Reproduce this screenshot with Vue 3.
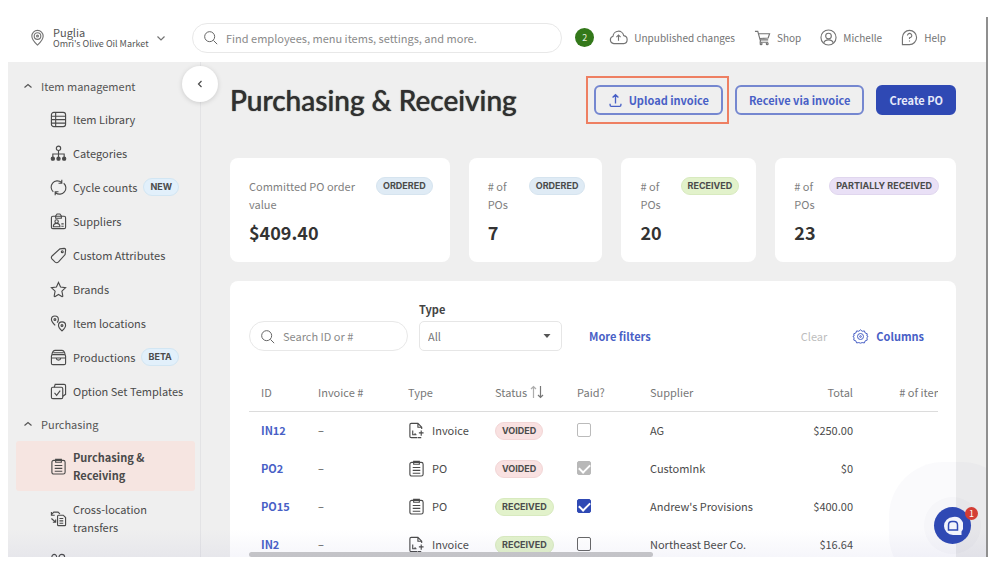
<script setup>
import { ref } from 'vue'

const items = [
  { label: 'Item Library', icon: 'library' },
  { label: 'Categories', icon: 'tree' },
  { label: 'Cycle counts', icon: 'cycle', tag: 'NEW' },
  { label: 'Suppliers', icon: 'supplier' },
  { label: 'Custom Attributes', icon: 'tag' },
  { label: 'Brands', icon: 'star' },
  { label: 'Item locations', icon: 'pins' },
  { label: 'Productions', icon: 'case', tag: 'BETA' },
  { label: 'Option Set Templates', icon: 'templates' },
]
const purchasing = [
  { label: 'Purchasing & Receiving', icon: 'clipboard', active: true },
  { label: 'Cross-location transfers', icon: 'transfer' },
  { label: 'Vendors', icon: 'people' },
]
const sections = [
  { title: 'Item management', items },
  { title: 'Purchasing', items: purchasing },
]

const paths = {
  library: '<rect x="1.5" y="1.5" width="15" height="15" rx="2.5"/><path d="M1.5 5.5h15M1.5 9.2h15M1.5 12.8h15M6 1.5v15"/>',
  tree: '<circle cx="9" cy="3.5" r="2.3"/><path d="M9 6v7M3 13V9.5h12V13"/><g fill="currentColor"><circle cx="3" cy="14.5" r="1.7"/><circle cx="9" cy="14.5" r="1.7"/><circle cx="15" cy="14.5" r="1.7"/></g>',
  cycle: '<path d="M3.500 13.500A6.500 6.500 0 0 1 12 3.500M14.500 4.500A6.500 6.500 0 0 1 6 14.500M12.500 .8V4.500H9M5.500 17.200V13.500H9"/>',
  supplier: '<rect x="1.500" y="3.500" width="15" height="13" rx="1.500"/><path d="M6 5.500h6V3L10.500 1h-3L6 3zM3.500 14.500c0-2.500 1.500-3.500 3.500-3.500s3.500 1 3.500 3.500zM12 11.500h2.500M12 14h2.500"/><circle cx="7" cy="9" r="1.800"/>',
  tag: '<path d="M10.500 2 15 1.500Q16.700 1.500 16.500 3.500L16 8 9 15.800Q7.200 17.500 5.500 16L2 12.500Q.8 11 2.200 9.500z"/><circle cx="13" cy="5" r="1"/>',
  star: '<path d="m9 1.500 2.200 4.800 5.300.7-3.900 3.700 1 5.300Q13.400 16.800 12.500 16.300L9 14.300l-3.500 2Q4.600 16.800 4.400 16l1-5.300L1.500 7l5.300-.7z"/>',
  pins: '<path d="M5.500 11C3 8.500 1.500 6.800 1.500 4.800a3.700 3.700 0 0 1 7.400 0c0 1.200-.5 2.200-1.300 3.300M12.700 16.800C10.300 14.500 9 13 9 11a3.700 3.700 0 0 1 7.500 0c0 2-1.400 3.500-3.800 5.800z"/><circle cx="5.200" cy="4.800" r="1"/><circle cx="12.700" cy="11" r="1"/>',
  case: '<rect x="1.500" y="6" width="15" height="10.500" rx="1.500"/><path d="M2 6c.5-3 1.500-4.500 3.500-4.500h7c2 0 3 1.500 3.500 4.500M3.500 4h11M2 9.500h14M6.500 9.500c.5 3 4.500 3 5 0"/>',
  templates: '<rect x="1.500" y="4.500" width="12" height="12" rx="1.500"/><path d="M4.500 4.500 5.500 1.500H15q1.500 0 1.500 1.500v9l-3 2M4.800 10.500l2.200 2.500 3.800-5"/>',
  clipboard: '<rect x="2" y="2.500" width="14" height="14.500" rx="2"/><path d="M6 1.500h6v3H6zM5 8h8M5 11h8M5 14h8"/>',
  transfer: '<path d="M5 5.500H1.500V2M1.500 5 4 2.200h4.500l2 2M1.500 9l4.500 4M6 10v3H3M8 6.500q0-1 1-1h5l2.500 2.500v7.500q0 1-1 1H9q-1 0-1-1z"/><path d="M10 9h4M10 11.500h4M10 14h4"/>',
  people: '<circle cx="4.500" cy="4" r="2.500"/><circle cx="12.500" cy="4.500" r="3"/><path d="M1 12c0-4 6-4 6.500-1M8 14c0-5 9-5 9 0z"/>',
  invoice: '<path d="M10 16.500H3.500Q2 16.500 2 15V3Q2 1.500 3.500 1.500H10.500l4 4V7.500M10.500 1.500V5.500h4M5 9v4.500h4M7.500 12v1"/><path d="M14 9v5.500M11.500 11.500h5M10.500 16.500h3.500"/>',
}

const cards = [
  { label: 'Committed PO order value', badge: 'ORDERED', tone: 'blue', value: '$409.40' },
  { label: '# of POs', badge: 'ORDERED', tone: 'blue', value: '7' },
  { label: '# of POs', badge: 'RECEIVED', tone: 'green', value: '20' },
  { label: '# of POs', badge: 'PARTIALLY RECEIVED', tone: 'purple', value: '23' },
]

const rows = ref([
  { id: 'IN12', type: 'Invoice', status: 'VOIDED', paid: false, disabled: true, supplier: 'AG', total: '$250.00' },
  { id: 'PO2', type: 'PO', status: 'VOIDED', paid: true, disabled: true, supplier: 'CustomInk', total: '$0' },
  { id: 'PO15', type: 'PO', status: 'RECEIVED', paid: true, disabled: false, supplier: "Andrew's Provisions", total: '$400.00' },
  { id: 'IN2', type: 'Invoice', status: 'RECEIVED', paid: false, disabled: false, supplier: 'Northeast Beer Co.', total: '$16.64' },
])
const type = ref('All')
</script>

<template>
  <div class="page">
    <div class="frame">
      <header class="topbar">
        <button class="location" type="button">
          <svg class="icon" viewBox="0 0 18 18"><path d="M9 17C5 13.500 3 11 3 7.500a6 6 0 0 1 12 0C15 11 13 13.500 9 17z" /><circle cx="9" cy="7.500" r="3.500" /><circle cx="9" cy="7.500" r="1" /></svg>
          <span class="place"><span class="name">Puglia</span><span class="market">Omri's Olive Oil Market</span></span>
          <svg class="chev" viewBox="0 0 10 10"><path d="M1.500 3.500 5 7l3.500-3.500" /></svg>
        </button>
        <label class="search global">
          <svg class="icon" viewBox="0 0 18 18"><circle cx="8" cy="8" r="6" /><path d="m12.500 12.500 4.500 4.500" /></svg>
          <input type="search" aria-label="Search" placeholder="Find employees, menu items, settings, and more." />
        </label>
        <nav class="links">
          <span class="count">2</span>
          <a href="#"><svg class="icon wide" viewBox="0 0 20 18"><path d="M5 15.500a4 4 0 0 1-.8-7.800A5.700 5.700 0 0 1 15.500 7a4.300 4.300 0 0 1 0 8.500zM10 12.500v-6M7.800 8.500 10 6.300l2.200 2.200" /></svg>Unpublished changes</a>
          <a href="#"><svg class="icon" viewBox="0 0 18 18"><path d="M1 2.500h3l2.500 9H15M4.800 5H16.500L15 9.500 6 10M7 11.500 6.500 14H15" /><circle cx="7.500" cy="15.500" r="1" /><circle cx="14" cy="15.500" r="1" /></svg>Shop</a>
          <a href="#"><svg class="icon" viewBox="0 0 18 18"><circle cx="9" cy="9" r="8" /><circle cx="9" cy="7.500" r="3" /><path d="M4 15c.5-2.500 2-3.500 5-3.500s4.500 1 5 3.500" /></svg>Michelle</a>
          <a href="#"><svg class="icon" viewBox="0 0 18 18"><path d="M1.500 16.500V9A7.500 7.500 0 1 1 9 16.500zM6.800 7A2.300 2.300 0 1 1 9 9.300v1.200M9 12.300v1" /></svg>Help</a>
        </nav>
      </header>

      <div class="body">
        <aside class="sidebar">
          <button class="collapse" type="button" aria-label="Collapse sidebar">
            <svg class="chev" viewBox="0 0 10 10"><path d="M6.500 2 3.500 5l3 3" /></svg>
          </button>
          <nav v-for="s in sections" :key="s.title" class="group">
            <button class="section" type="button">
              <svg class="chev" viewBox="0 0 10 10"><path d="M1.500 6.500 5 3.500l3.500 3" /></svg>{{ s.title }}
            </button>
            <a v-for="i in s.items" :key="i.label" href="#" class="item" :class="{ active: i.active }">
              <svg class="icon" viewBox="0 0 18 18" v-html="paths[i.icon]"></svg>
              <span>{{ i.label }}</span>
              <span v-if="i.tag" class="badge sky">{{ i.tag }}</span>
            </a>
          </nav>
        </aside>

        <main class="main">
          <div class="heading">
            <h1>Purchasing &amp; Receiving</h1>
            <div class="actions">
              <div class="spot">
                <button class="btn" type="button">
                  <svg class="icon" viewBox="0 0 18 18"><path d="M9 12.500V2M5.500 5.500 9 2l3.500 3.500M2.500 13v1.500q0 1.500 1.500 1.500h10q1.500 0 1.500-1.500V13" /></svg>Upload invoice
                </button>
              </div>
              <button class="btn" type="button">Receive via invoice</button>
              <button class="btn primary" type="button">Create PO</button>
            </div>
          </div>

          <div class="cards">
            <section v-for="(c, n) in cards" :key="n" class="card">
              <div class="cardtop">
                <span class="cardlabel">{{ c.label }}</span>
                <span class="badge" :class="c.tone">{{ c.badge }}</span>
              </div>
              <strong class="value">{{ c.value }}</strong>
            </section>
          </div>

          <section class="panel">
            <div class="filters">
              <label class="search ids">
                <svg class="icon" viewBox="0 0 18 18"><circle cx="8" cy="8" r="6" /><path d="m12.500 12.500 4.500 4.500" /></svg>
                <input type="search" aria-label="Search ID or number" placeholder="Search ID or #" />
              </label>
              <div class="field">
                <label for="type">Type</label>
                <div class="selectwrap">
                  <select id="type" v-model="type"><option>All</option><option>Invoice</option><option>PO</option></select>
                  <svg class="caret" viewBox="0 0 8 8"><path d="M.5 2h7L4 6z" /></svg>
                </div>
              </div>
              <button class="text more" type="button">More filters</button>
              <button class="text clear" type="button" disabled>Clear</button>
              <button class="text" type="button">
                <svg class="icon gear" viewBox="0 0 18 18"><path d="m9 1 2 1.700 2.700-.4.900 2.500 2.500.9-.4 2.700L18 9l-1.300 1.600.4 2.700-2.500.9-.9 2.500-2.700-.4L9 17l-2-.7-2.700.4-.9-2.500-2.500-.9.400-2.700L0 9l1.300-.600-.4-2.700 2.500-.9.900-2.500 2.700.4z" /><circle cx="9" cy="9" r="3.600" /><circle cx="9" cy="9" r="1" /></svg>Columns
              </button>
            </div>

            <div class="scroll">
              <table>
                <thead>
                  <tr>
                    <th class="c-id">ID</th>
                    <th class="c-inv">Invoice #</th>
                    <th class="c-type">Type</th>
                    <th class="c-status">Status <svg class="sort" viewBox="0 0 14 14"><path class="dim" d="M3.500 13V1.500M1 4l2.500-2.500L6 4" /><path d="M10.500 1v11.500M8 10l2.500 2.500L13 10" /></svg></th>
                    <th class="c-paid">Paid?</th>
                    <th>Supplier</th>
                    <th class="c-total num">Total</th>
                    <th class="c-items num"># of items</th>
                  </tr>
                </thead>
                <tbody>
                  <tr v-for="r in rows" :key="r.id">
                    <td><a href="#" class="id">{{ r.id }}</a></td>
                    <td>–</td>
                    <td><span class="kind"><svg class="icon" viewBox="0 0 18 18" v-html="paths[r.type === 'PO' ? 'clipboard' : 'invoice']"></svg>{{ r.type }}</span></td>
                    <td><span class="badge" :class="r.status === 'VOIDED' ? 'red' : 'green'">{{ r.status }}</span></td>
                    <td><input v-model="r.paid" type="checkbox" :disabled="r.disabled" :aria-label="'Paid ' + r.id" /></td>
                    <td>{{ r.supplier }}</td>
                    <td class="num">{{ r.total }}</td>
                    <td></td>
                  </tr>
                </tbody>
              </table>
            </div>
          </section>
          <div class="hbar"></div>
        </main>
      </div>
      <div class="haze"></div>
      <button class="chat" type="button" aria-label="Open chat">
        <svg viewBox="0 0 20 20"><path class="bubble" d="M10 1a9 9 0 1 0 0 18h8.500v-3.500A9 9 0 0 0 10 1z" /><path class="mark" d="M5.500 14V9Q5.500 5.500 9 5.500h2Q14.500 5.500 14.500 9v5z" /></svg>
        <span class="alert">1</span>
      </button>
    </div>
  </div>
</template>

<style>
body { margin: 0; background: #fff; }
</style>

<style scoped>
* { box-sizing: border-box; }
.page {
  height: 100vh;
  padding: 17px 12px 13px 8px;
  font: 11px/18px "Noto Sans CJK JP", "Noto Sans", sans-serif;
  color: #4a4a4a;
}
.frame {
  position: relative;
  height: 100%;
  display: flex;
  flex-direction: column;
  overflow: hidden;
  border-right: 2px solid #8f8f8f;
  background: #efefef;
}
button, input, select { font: inherit; color: inherit; }
button { border: 0; background: none; padding: 0; cursor: pointer; }
a { color: inherit; text-decoration: none; }
.icon, .chev, .sort { flex: none; fill: none; stroke: currentColor; stroke-width: 1.2; }
.icon { width: 17px; height: 17px; }
.chev { width: 10px; height: 10px; }

.topbar {
  flex: none;
  height: 45px;
  display: flex;
  align-items: center;
  padding: 0 40px 4px 21px;
  background: #fff;
  color: #737373;
}
.location { flex: none; width: 163px; display: flex; align-items: center; gap: 7px; text-align: left; }
.place { display: flex; flex-direction: column; line-height: 12px; color: #555; }
.market { font-size: 9px; }
.search { display: flex; align-items: center; gap: 8px; height: 30px; border: 1px solid #e8e8e8; border-radius: 15px; background: #fff; color: #666; padding: 0 10px; }
.search input { flex: 1; min-width: 0; border: 0; outline: 0; background: none; padding: 0; }
.search input::placeholder { color: #8a8a8a; opacity: 1; }
.search .icon { width: 15px; height: 15px; }
.global { flex: 0 1 370px; }
.links { margin-left: auto; display: flex; align-items: center; gap: 19px; font-size: 10px; }
.links a { display: flex; align-items: center; gap: 6px; white-space: nowrap; }
.links .wide { width: 19px; }
.links .count { width: 19px; height: 19px; margin-right: -4px; border-radius: 50%; background: #33781a; color: #e5f0df; text-align: center; font-size: 9px; line-height: 19px; }

.body { flex: 1; min-height: 0; display: flex; }
.sidebar { position: relative; flex: none; width: 193px; padding: 8px 5px 0 8px; border-right: 1px solid #e3e3e5; }
.collapse { position: absolute; right: -18px; top: 4px; width: 36px; height: 36px; display: grid; place-items: center; border-radius: 50%; background: #fff; box-shadow: 0 1px 5px rgba(0, 0, 0, .15); }
.group { display: flex; flex-direction: column; }
.section { display: flex; align-items: center; gap: 8px; height: 32px; padding-left: 7px; color: #555; }
.item { display: flex; align-items: center; gap: 6px; margin: 1px 0; padding: 7px 8px 7px 34px; border-radius: 3px; }
.active { background: #f6e5e1; font-weight: 700; padding-right: 40px; }
.badge { display: inline-block; flex: none; height: 18px; padding: 0 6px; border: 1px solid transparent; border-radius: 9px; font: 700 9px/16px Inter, "Noto Sans", sans-serif; white-space: nowrap; color: #4b4b4b; }
.sky { background: #e2f0fb; border-color: #d2e6f3; }
.blue { background: #dfebf5; border-color: #d6e4ef; }
.green { background: #e2f2cb; border-color: #d8eabf; }
.purple { background: #e9e0f6; border-color: #e0d6ee; }
.red { background: #f9e1e1; border-color: #f2d6d6; }

.main { position: relative; flex: 1; min-width: 0; padding: 23px 30px 0 29px; }
.heading { display: flex; align-items: center; justify-content: space-between; height: 30px; }
h1 { margin: 0; font: 400 28px/30px "Lato Medium", Lato, "Noto Sans", sans-serif; color: #303030; text-shadow: 0 0 1px #303030; white-space: nowrap; }
.actions { display: flex; gap: 12px; }
.btn { display: flex; align-items: center; gap: 6px; height: 30px; padding: 0 12px; border: 2px solid #7587d0; border-radius: 6px; color: #4860c6; font-weight: 700; white-space: nowrap; }
.btn .icon { width: 15px; height: 15px; stroke-width: 1.600; }
.primary { padding: 0 11px; background: #2f49b4; border-color: #2f49b4; color: #e6eafa; }
.spot { position: relative; }
.spot::before { content: ""; position: absolute; inset: -9px -6px -9px -8px; border: 2px solid #ee7f62; pointer-events: none; }

.cards { display: grid; grid-template-columns: 220fr 134fr 135fr 181fr; gap: 19px; margin-top: 43px; }
.card { min-width: 0; padding: 19px 17px 18px 19px; border-radius: 8px; background: #fff; }
.cardtop { display: flex; justify-content: space-between; gap: 12px; color: #808080; }
.value { display: block; margin-top: 7px; font-size: 18px; line-height: 24px; color: #333; }

.panel { margin-top: 19px; padding: 19px 18px 0 19px; border-radius: 8px 8px 0 0; background: #fff; min-height: 300px; }
.filters { display: flex; align-items: flex-end; color: #777; }
.ids { width: 159px; margin-right: 11px; }
.ids input { width: 100%; }
.field { width: 143px; margin-right: 27px; }
.field label { display: block; margin-bottom: 3px; font-weight: 700; color: #444; }
.selectwrap { position: relative; }
select { display: block; width: 100%; height: 30px; padding: 0 8px; border: 1px solid #e6e6e6; border-radius: 5px; background: #fff; appearance: none; }
.caret { position: absolute; right: 11px; top: 11px; width: 8px; height: 8px; fill: #555; pointer-events: none; }
.text { display: flex; align-items: center; gap: 8px; height: 30px; color: #4860c6; font-weight: 700; }
.text .icon { width: 15px; height: 15px; overflow: visible; }
.filters > .text:last-child { margin-right: 14px; }
.clear { margin-left: auto; margin-right: 26px; color: #bdbdbd; font-weight: 400; }

.scroll { margin-top: 22px; overflow: hidden; }
table { width: calc(100% + 23px); border-collapse: collapse; table-layout: fixed; }
th, td { height: 38px; padding: 0 12px; text-align: left; white-space: nowrap; font-weight: 400; }
th { color: #777; border-bottom: 1px solid #dcdcdc; }
.c-id { width: 57px; }
.c-inv { width: 90px; }
.c-type { width: 87px; }
.c-status { width: 82px; }
.c-paid { width: 73px; }
.c-total { width: 87px; }
.c-items { width: 96px; }
.num { text-align: right; }
.id { color: #4860c6; font-weight: 700; }
.sort { width: 14px; height: 14px; vertical-align: -2px; }
.dim { opacity: .6; }
.kind { display: flex; align-items: center; gap: 7px; }
td .badge { vertical-align: middle; }
input[type="checkbox"] { appearance: none; width: 14px; height: 14px; margin: 0; border: 1px solid #666; border-radius: 2px; background: #fff; display: grid; place-items: center; }
input[type="checkbox"]:disabled { border-color: #bbb; }
input[type="checkbox"]:checked { background: #2f49b4; border-color: #2f49b4; }
input[type="checkbox"]:checked:disabled { background: #b8b8b8; border-color: #b8b8b8; }
input[type="checkbox"]:checked::before { content: ""; width: 9px; height: 5px; margin-top: -2px; border: solid #fff; border-width: 0 0 2px 2px; transform: rotate(-45deg); }
.hbar { position: absolute; bottom: 0; left: 48px; width: 404px; height: 5px; border-radius: 3px; background: #c9c9c9; }

.haze { position: absolute; left: 0; right: 0; bottom: 0; height: 28px; background: linear-gradient(rgba(100, 100, 180, 0), rgba(100, 100, 180, .06)); pointer-events: none; }
.chat { position: absolute; right: 15px; bottom: 13px; width: 37px; height: 37px; display: grid; place-items: center; border-radius: 50%; background: #2f49b4; box-shadow: 0 0 0 10px rgba(70, 70, 110, .02), 0 0 0 45px rgba(90, 90, 160, .03); }
.chat svg { width: 20px; height: 20px; }
.bubble { fill: #f2f4fc; }
.mark { fill: none; stroke: #2f49b4; stroke-width: 1.500; }
.alert { position: absolute; right: -7px; top: 0; width: 13px; height: 13px; border-radius: 50%; background: #d33d35; color: #fff; font-size: 9px; line-height: 13px; text-align: center; }
</style>
